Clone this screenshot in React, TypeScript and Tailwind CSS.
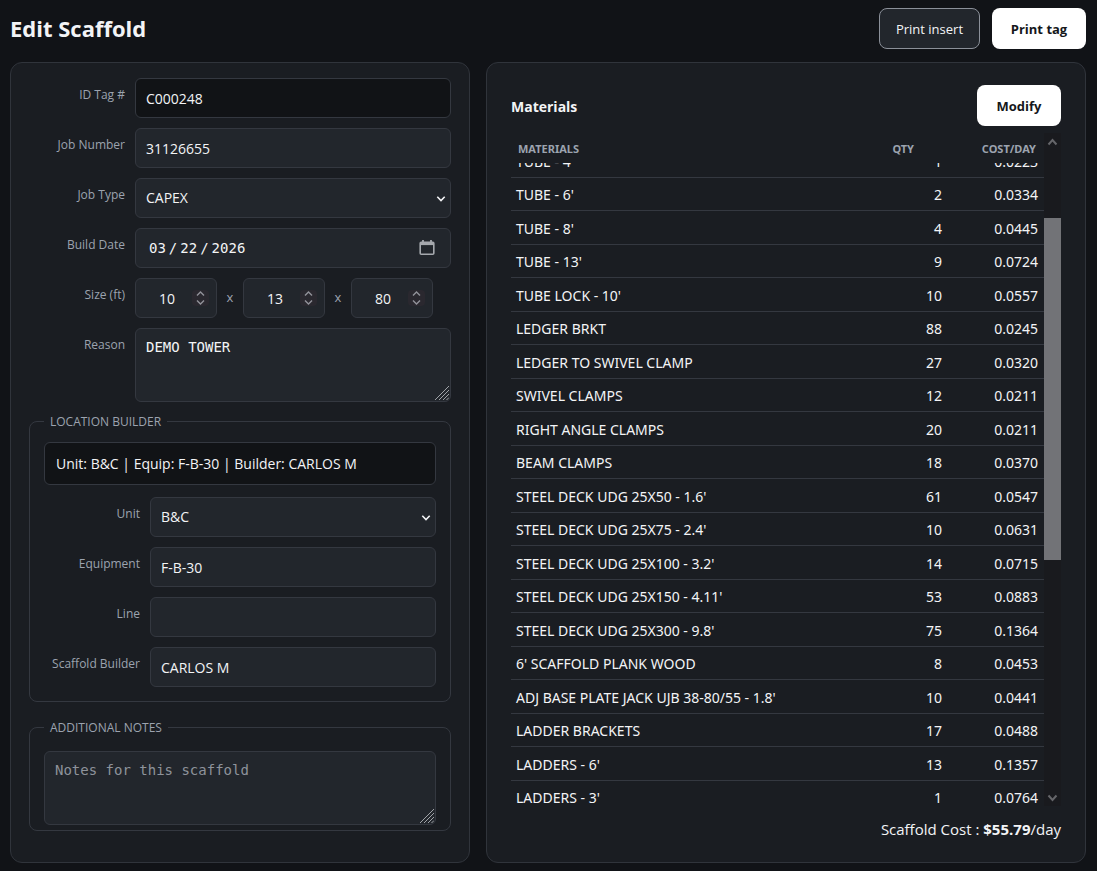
import { useLayoutEffect, useRef, type ReactNode } from 'react';

const materials: [string, number, string][] = [
  ["TUBE - 4'", 1, '0.0223'],
  ["TUBE - 6'", 2, '0.0334'],
  ["TUBE - 8'", 4, '0.0445'],
  ["TUBE - 13'", 9, '0.0724'],
  ["TUBE LOCK - 10'", 10, '0.0557'],
  ['LEDGER BRKT', 88, '0.0245'],
  ['LEDGER TO SWIVEL CLAMP', 27, '0.0320'],
  ['SWIVEL CLAMPS', 12, '0.0211'],
  ['RIGHT ANGLE CLAMPS', 20, '0.0211'],
  ['BEAM CLAMPS', 18, '0.0370'],
  ["STEEL DECK UDG 25X50 - 1.6'", 61, '0.0547'],
  ["STEEL DECK UDG 25X75 - 2.4'", 10, '0.0631'],
  ["STEEL DECK UDG 25X100 - 3.2'", 14, '0.0715'],
  ["STEEL DECK UDG 25X150 - 4.11'", 53, '0.0883'],
  ["STEEL DECK UDG 25X300 - 9.8'", 75, '0.1364'],
  ["6' SCAFFOLD PLANK WOOD", 8, '0.0453'],
  ["ADJ BASE PLATE JACK UJB 38-80/55 - 1.8'", 10, '0.0441'],
  ['LADDER BRACKETS', 17, '0.0488'],
  ["LADDERS - 6'", 13, '0.1357'],
  ["LADDERS - 3'", 1, '0.0764'],
];

const box = 'block w-full rounded-md border border-[#343840] text-[#f3f4f6] outline-none';
const field = `${box} h-10 bg-[#22262c] px-[10px] text-sm`;
const area = `${box} h-[74px] resize-none bg-[#22262c] px-[10px] py-2 font-['DejaVu_Sans_Mono',monospace] text-sm leading-5 placeholder:text-[#8e939b]`;

function Row({ id, label, children }: { id: string; label: string; children: ReactNode }) {
  return (
    <div className="grid grid-cols-[96px_minmax(0,1fr)] items-start gap-[10px]">
      <label htmlFor={id} className="pt-2 text-right text-xs leading-[18px] whitespace-nowrap text-[#9ca3af]">
        {label}
      </label>
      {children}
    </div>
  );
}

function Select({ id, value }: { id: string; value: string }) {
  return (
    <div className="relative">
      <select id={id} defaultValue={value} className={`${field} appearance-none`}>
        <option>{value}</option>
      </select>
      <svg className="pointer-events-none absolute top-4 right-[5px] h-[10px] w-[10px]" viewBox="0 0 10 10" fill="none" stroke="#f3f4f6" strokeWidth="1.6">
        <path d="M1.300 2.800 5 6.500 8.700 2.800" />
      </svg>
    </div>
  );
}

function NumberField({ id, label, value }: { id: string; label: string; value: number }) {
  return (
    <div className="relative w-[82px]">
      <input
        id={id}
        aria-label={label}
        type="number"
        defaultValue={value}
        className={`${box} h-10 [appearance:textfield] bg-[#22262c] pr-7 pl-[10px] text-center text-sm [&::-webkit-inner-spin-button]:appearance-none`}
      />
      <svg className="pointer-events-none absolute top-3 right-2 h-4 w-[17px] rounded-sm bg-[#2a282f]" viewBox="0 0 17 16" fill="none" stroke="#92929a" strokeWidth="1.4">
        <path d="M5 5.500 8.500 2 12 5.500M5 10.500 8.500 14 12 10.500" />
      </svg>
    </div>
  );
}

function Grip() {
  return (
    <svg className="pointer-events-none absolute right-[2px] bottom-[2px] h-[14px] w-[14px]" viewBox="0 0 14 14" fill="none" stroke="#a0a3a8" strokeWidth="1">
      <path d="M0 14 14 0M4 14 14 4M8 14 14 8M11.500 14 14 11.500" />
    </svg>
  );
}

function Materials() {
  const scroller = useRef<HTMLDivElement>(null);
  useLayoutEffect(() => {
    if (scroller.current) scroller.current.scrollTop = 19;
  }, []);
  return (
    <div className="mt-[7px] flex h-[673px]">
      <div ref={scroller} className="min-w-0 flex-1 overflow-y-auto [scrollbar-width:none]">
        <table className="w-full table-fixed border-separate border-spacing-0 font-['Noto_Sans',sans-serif] text-sm text-[#f3f4f6]">
          <thead>
            <tr className="h-[30px] text-[11px] leading-4 text-[#9ca3af]">
              <th className="sticky top-0 bg-[#1a1d22] pt-[2px] pl-[7px] text-left font-bold">MATERIALS</th>
              <th className="sticky top-0 w-[88px] bg-[#1a1d22] pt-[2px] pr-[33px] text-right font-bold">QTY</th>
              <th className="sticky top-0 w-[97px] bg-[#1a1d22] pt-[2px] pr-2 text-right font-bold">COST/DAY</th>
            </tr>
          </thead>
          <tbody>
            {materials.map(([name, qty, cost]) => (
              <tr key={name} className="h-[34px] leading-5 even:h-[33px]">
                <td className="border-b border-[#343840] pt-[2px] pl-[5px] whitespace-nowrap">{name}</td>
                <td className="border-b border-[#343840] pt-[2px] pr-[5px] text-right">{qty}</td>
                <td className="border-b border-[#343840] pt-[2px] pr-[6px] text-right">{cost}</td>
              </tr>
            ))}
          </tbody>
        </table>
      </div>
      <div className="flex w-[17px] flex-col bg-[#191a1e]" aria-hidden="true">
        <svg className="h-[17px] w-[17px] shrink-0" viewBox="0 0 17 17" fill="none" stroke="#65666a" strokeWidth="2">
          <path d="M4.500 11.500 8.500 7 12.500 11.500" />
        </svg>
        <div className="flex-[68]" />
        <div className="flex-[342] bg-[#727377]" />
        <div className="flex-[229]" />
        <svg className="h-[17px] w-[17px] shrink-0" viewBox="0 0 17 17" fill="none" stroke="#65666a" strokeWidth="2">
          <path d="M4.500 6.500 8.500 11 12.500 6.500" />
        </svg>
      </div>
    </div>
  );
}

const solid = 'h-[41px] rounded-lg bg-white pt-[2px] text-[13px] font-bold text-[#15171b]';
const panel = 'rounded-xl border border-[#30343b] bg-[#1a1d22]';
const group = 'min-w-0 rounded-lg border border-[#343840] px-[14px]';
const legend = 'px-[6px] pt-[2px] text-xs leading-[18px] text-[#9ca3af]';

export default function App() {
  return (
    <div className="min-h-screen bg-[#111317] pt-2 pr-[11px] pb-2 pl-[10px] font-['Open_Sans',sans-serif] text-[#f3f4f6]">
      <header className="flex items-center gap-3">
        <h1 className="flex-1 pb-[2px] text-[22px] leading-7 font-bold">Edit Scaffold</h1>
        <button className="h-[41px] w-[101px] rounded-lg border border-[#8b9099] bg-[#22262c] pt-[2px] text-[13px]">Print insert</button>
        <button className={`${solid} w-[94px]`}>Print tag</button>
      </header>
      <main className="mt-[13px] grid grid-cols-[minmax(0,460fr)_minmax(0,600fr)] gap-4">
        <form className={`${panel} px-[18px] pt-[15px] pb-[31px]`}>
          <div className="flex flex-col gap-[10px]">
            <Row id="tag" label="ID Tag #">
              <input id="tag" readOnly defaultValue="C000248" className={`${box} h-10 bg-[#111316] px-[10px] text-sm`} />
            </Row>
            <Row id="job" label="Job Number">
              <input id="job" defaultValue="31126655" className={field} />
            </Row>
            <Row id="type" label="Job Type">
              <Select id="type" value="CAPEX" />
            </Row>
            <Row id="date" label="Build Date">
              <div className="relative">
                <input
                  id="date"
                  type="date"
                  defaultValue="2026-03-22"
                  className={`${box} h-10 bg-[#22262c] px-3 font-['DejaVu_Sans_Mono',monospace] text-sm [&::-webkit-calendar-picker-indicator]:opacity-0 [&::-webkit-datetime-edit-text]:px-[2px]`}
                />
                <svg className="pointer-events-none absolute top-3 right-4 h-4 w-4" viewBox="0 0 16 16" fill="none" stroke="#a5a8ad" strokeWidth="1.600">
                  <rect x="1.200" y="2.300" width="13.600" height="11.900" rx="1" />
                  <path d="M1 3.600h14" strokeWidth="3" />
                  <path d="M4 0v3M12 0v3" strokeWidth="1.800" />
                </svg>
              </div>
            </Row>
            <Row id="length" label="Size (ft)">
              <div className="flex items-center gap-[9px] text-[13px] text-[#9ca3af]">
                <NumberField id="length" label="Length" value={10} />
                <span className="w-2 text-center">x</span>
                <NumberField id="width" label="Width" value={13} />
                <span className="w-2 text-center">x</span>
                <NumberField id="height" label="Height" value={80} />
              </div>
            </Row>
            <Row id="reason" label="Reason">
              <div className="relative">
                <textarea id="reason" defaultValue="DEMO TOWER" className={area} />
                <Grip />
              </div>
            </Row>
          </div>
          <fieldset className={`${group} mt-[9px] pt-[11px] pb-[14px]`}>
            <legend className={legend}>LOCATION BUILDER</legend>
            <div className="rounded-md border border-[#343840] bg-[#111316] px-[11px] py-[10px] text-sm leading-[21px]">
              Unit: B&amp;C | Equip: F-B-30 | Builder: CARLOS M
            </div>
            <div className="mt-3 flex flex-col gap-[10px]">
              <Row id="unit" label="Unit">
                <Select id="unit" value="B&C" />
              </Row>
              <Row id="equipment" label="Equipment">
                <input id="equipment" defaultValue="F-B-30" className={field} />
              </Row>
              <Row id="line" label="Line">
                <input id="line" className={field} />
              </Row>
              <Row id="builder" label="Scaffold Builder">
                <input id="builder" defaultValue="CARLOS M" className={field} />
              </Row>
            </div>
          </fieldset>
          <fieldset className={`${group} mt-[15px] pt-[14px] pb-[5px]`}>
            <legend className={legend}>ADDITIONAL NOTES</legend>
            <div className="relative">
              <textarea aria-label="Additional notes" placeholder="Notes for this scaffold" className={area} />
              <Grip />
            </div>
          </fieldset>
        </form>
        <section className={`${panel} px-6 pt-[22px]`}>
          <div className="flex items-center justify-between">
            <h2 className="pt-[2px] text-sm font-bold">Materials</h2>
            <button className={`${solid} w-[84px]`}>Modify</button>
          </div>
          <Materials />
          <p className="mt-[11px] text-right text-[15px] leading-6">
            Scaffold Cost : <strong>$55.79</strong>/day
          </p>
        </section>
      </main>
    </div>
  );
}
